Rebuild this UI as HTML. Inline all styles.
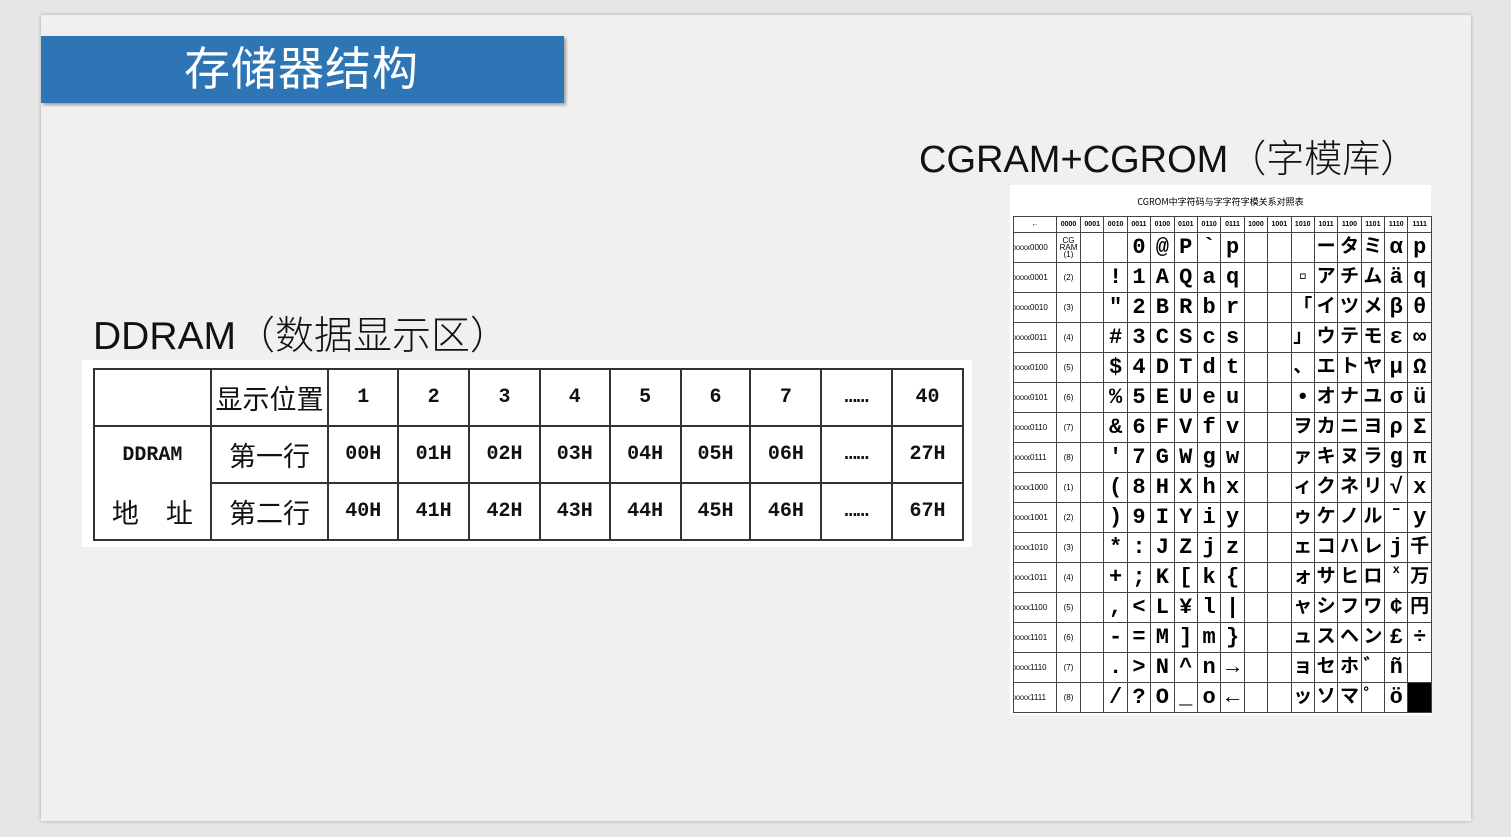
<!DOCTYPE html>
<html><head><meta charset="utf-8"><style>
body{margin:0;width:1511px;height:837px;background:#e6e6e6;position:relative;overflow:hidden;font-family:"Liberation Sans","Noto Sans CJK SC",sans-serif}
.slide{position:absolute;left:41px;top:15px;width:1430px;height:806px;background:#f0f0f0;box-shadow:0 0 4px rgba(0,0,0,.25)}
.bar{position:absolute;left:41px;top:36px;width:523px;height:67px;background:#2e75b6;box-shadow:2px 2px 3px rgba(0,0,0,.35);color:#fff;font-size:46px;line-height:67px;text-indent:143px;letter-spacing:1px}
.h{position:absolute;font-size:39px;color:#111;white-space:nowrap;font-family:"Liberation Sans","Noto Sans CJK SC",sans-serif;font-weight:300}
.dd{position:absolute;left:82px;top:360px;width:890px;height:187px;background:#fff}
.dd table{position:absolute;left:11px;top:8px;border-collapse:collapse;width:871px;height:173px;font-family:"Liberation Mono","Noto Sans CJK SC",monospace}
.dd td{border:2px solid #333;text-align:center;font-size:20px;font-weight:bold;color:#111;padding:0}
.dd td.c{font-family:"Noto Sans CJK SC",sans-serif;font-weight:normal;font-size:27px}
.cg{position:absolute;left:1010px;top:185px;width:421px;height:530px;background:#fff}
.cg .t{position:absolute;left:0;width:421px;top:10px;text-align:center;font-size:9px;font-family:"Noto Sans CJK SC",sans-serif}
.cg table{position:absolute;left:3px;top:31px;border-collapse:collapse;table-layout:fixed;width:418px}
.cg td{border:1px solid #444;height:29px;padding:0;text-align:center;font-size:22px;font-weight:bold;font-family:"Liberation Mono","Noto Sans CJK JP",monospace;line-height:29px;overflow:hidden;white-space:nowrap}
.cg tr.hd td{height:15px;font-size:7px;line-height:15px;font-family:"Liberation Sans",sans-serif}
.cg td.l{font-size:8px;font-weight:normal;font-family:"Liberation Sans",sans-serif;text-align:left}
.cg td.n{font-size:8px;font-weight:normal;font-family:"Liberation Sans",sans-serif}
.cg td.k{font-size:19px}
</style></head><body>
<div class="slide"></div>
<div class="bar">存储器结构</div>
<div class="h" style="left:919px;top:128px;font-size:38px">CGRAM+CGROM（字模库）</div>
<div class="h" style="left:93px;top:305px">DDRAM（数据显示区）</div>
<div class="dd"><table>
<colgroup><col style="width:117px"><col style="width:118px"><col style="width:70px"><col style="width:71px"><col style="width:71px"><col style="width:70px"><col style="width:71px"><col style="width:70px"><col style="width:71px"><col style="width:71px"><col style="width:71px"></colgroup>
<tr><td></td><td class="c">显示位置</td><td>1</td><td>2</td><td>3</td><td>4</td><td>5</td><td>6</td><td>7</td><td>……</td><td>40</td></tr>
<tr><td style="border-bottom:none">DDRAM</td><td class="c">第一行</td><td>00H</td><td>01H</td><td>02H</td><td>03H</td><td>04H</td><td>05H</td><td>06H</td><td>……</td><td>27H</td></tr>
<tr><td class="c" style="border-top:none">地　址</td><td class="c">第二行</td><td>40H</td><td>41H</td><td>42H</td><td>43H</td><td>44H</td><td>45H</td><td>46H</td><td>……</td><td>67H</td></tr>
</table></div>
<div class="cg"><div class="t">CGROM中字符码与字字符字模关系对照表</div>
<table>
<colgroup><col style="width:43px"><col style="width:24px"><col span="15" style="width:23.4px"></colgroup>
<tr class="hd"><td>←</td><td>0000</td><td>0001</td><td>0010</td><td>0011</td><td>0100</td><td>0101</td><td>0110</td><td>0111</td><td>1000</td><td>1001</td><td>1010</td><td>1011</td><td>1100</td><td>1101</td><td>1110</td><td>1111</td></tr>
<tr><td class="l">xxxx0000</td><td class="n" style="line-height:7px">CG<br>RAM<br>(1)</td><td></td><td></td><td>0</td><td>@</td><td>P</td><td>`</td><td>p</td><td></td><td></td><td></td><td class="k">ー</td><td class="k">タ</td><td class="k">ミ</td><td>α</td><td>p</td></tr>
<tr><td class="l">xxxx0001</td><td class="n">(2)</td><td></td><td>!</td><td>1</td><td>A</td><td>Q</td><td>a</td><td>q</td><td></td><td></td><td>▫</td><td class="k">ア</td><td class="k">チ</td><td class="k">ム</td><td>ä</td><td>q</td></tr>
<tr><td class="l">xxxx0010</td><td class="n">(3)</td><td></td><td>"</td><td>2</td><td>B</td><td>R</td><td>b</td><td>r</td><td></td><td></td><td class="k">「</td><td class="k">イ</td><td class="k">ツ</td><td class="k">メ</td><td>β</td><td>θ</td></tr>
<tr><td class="l">xxxx0011</td><td class="n">(4)</td><td></td><td>#</td><td>3</td><td>C</td><td>S</td><td>c</td><td>s</td><td></td><td></td><td class="k">」</td><td class="k">ウ</td><td class="k">テ</td><td class="k">モ</td><td>ε</td><td>∞</td></tr>
<tr><td class="l">xxxx0100</td><td class="n">(5)</td><td></td><td>$</td><td>4</td><td>D</td><td>T</td><td>d</td><td>t</td><td></td><td></td><td class="k">、</td><td class="k">エ</td><td class="k">ト</td><td class="k">ヤ</td><td>μ</td><td>Ω</td></tr>
<tr><td class="l">xxxx0101</td><td class="n">(6)</td><td></td><td>%</td><td>5</td><td>E</td><td>U</td><td>e</td><td>u</td><td></td><td></td><td>•</td><td class="k">オ</td><td class="k">ナ</td><td class="k">ユ</td><td>σ</td><td>ü</td></tr>
<tr><td class="l">xxxx0110</td><td class="n">(7)</td><td></td><td>&amp;</td><td>6</td><td>F</td><td>V</td><td>f</td><td>v</td><td></td><td></td><td class="k">ヲ</td><td class="k">カ</td><td class="k">ニ</td><td class="k">ヨ</td><td>ρ</td><td>Σ</td></tr>
<tr><td class="l">xxxx0111</td><td class="n">(8)</td><td></td><td>'</td><td>7</td><td>G</td><td>W</td><td>g</td><td>w</td><td></td><td></td><td class="k">ァ</td><td class="k">キ</td><td class="k">ヌ</td><td class="k">ラ</td><td>g</td><td>π</td></tr>
<tr><td class="l">xxxx1000</td><td class="n">(1)</td><td></td><td>(</td><td>8</td><td>H</td><td>X</td><td>h</td><td>x</td><td></td><td></td><td class="k">ィ</td><td class="k">ク</td><td class="k">ネ</td><td class="k">リ</td><td>√</td><td>x</td></tr>
<tr><td class="l">xxxx1001</td><td class="n">(2)</td><td></td><td>)</td><td>9</td><td>I</td><td>Y</td><td>i</td><td>y</td><td></td><td></td><td class="k">ゥ</td><td class="k">ケ</td><td class="k">ノ</td><td class="k">ル</td><td>ˉ</td><td>y</td></tr>
<tr><td class="l">xxxx1010</td><td class="n">(3)</td><td></td><td>*</td><td>:</td><td>J</td><td>Z</td><td>j</td><td>z</td><td></td><td></td><td class="k">ェ</td><td class="k">コ</td><td class="k">ハ</td><td class="k">レ</td><td>j</td><td class="k">千</td></tr>
<tr><td class="l">xxxx1011</td><td class="n">(4)</td><td></td><td>+</td><td>;</td><td>K</td><td>[</td><td>k</td><td>{</td><td></td><td></td><td class="k">ォ</td><td class="k">サ</td><td class="k">ヒ</td><td class="k">ロ</td><td style="font-size:12px;line-height:14px;vertical-align:top">x</td><td class="k">万</td></tr>
<tr><td class="l">xxxx1100</td><td class="n">(5)</td><td></td><td>,</td><td>&lt;</td><td>L</td><td>¥</td><td>l</td><td>|</td><td></td><td></td><td class="k">ャ</td><td class="k">シ</td><td class="k">フ</td><td class="k">ワ</td><td>¢</td><td class="k">円</td></tr>
<tr><td class="l">xxxx1101</td><td class="n">(6)</td><td></td><td>-</td><td>=</td><td>M</td><td>]</td><td>m</td><td>}</td><td></td><td></td><td class="k">ュ</td><td class="k">ス</td><td class="k">ヘ</td><td class="k">ン</td><td>£</td><td>÷</td></tr>
<tr><td class="l">xxxx1110</td><td class="n">(7)</td><td></td><td>.</td><td>&gt;</td><td>N</td><td>^</td><td>n</td><td>→</td><td></td><td></td><td class="k">ョ</td><td class="k">セ</td><td class="k">ホ</td><td class="k">゛</td><td>ñ</td><td></td></tr>
<tr><td class="l">xxxx1111</td><td class="n">(8)</td><td></td><td>/</td><td>?</td><td>O</td><td>_</td><td>o</td><td>←</td><td></td><td></td><td class="k">ッ</td><td class="k">ソ</td><td class="k">マ</td><td class="k">゜</td><td>ö</td><td style="background:#000"></td></tr>
</table></div>
</body></html>
